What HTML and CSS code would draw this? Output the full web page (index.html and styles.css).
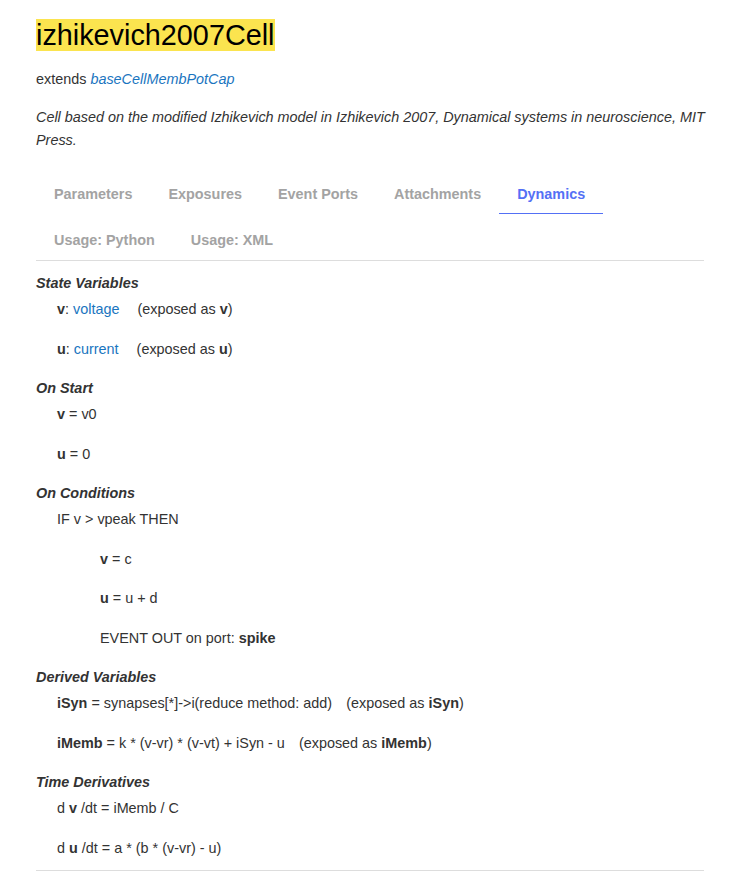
FILE: index.html
```html
<!DOCTYPE html>
<html>
<head>
<meta charset="utf-8">
<link rel="stylesheet" href="styles.css">
</head>
<body>
<div class="page">
  <h1 class="title"><span class="mark">izhikevich2007Cell</span></h1>
  <p class="extends">extends <a class="link-i" href="#">baseCellMembPotCap</a></p>
  <p class="desc">Cell based on the modified Izhikevich model in Izhikevich 2007, Dynamical systems in neuroscience, MIT Press.</p>

  <nav class="tabs">
    <span class="tab">Parameters</span>
    <span class="tab">Exposures</span>
    <span class="tab">Event Ports</span>
    <span class="tab">Attachments</span>
    <span class="tab active">Dynamics</span>
    <span class="tab">Usage: Python</span>
    <span class="tab">Usage: XML</span>
  </nav>

  <div class="content">
    <h3 class="sec first">State Variables</h3>
    <div class="item"><b>v</b>: <a class="link" href="#">voltage</a><span class="gap"></span>(exposed as <b>v</b>)</div>
    <div class="item"><b>u</b>: <a class="link" href="#">current</a><span class="gap"></span>(exposed as <b>u</b>)</div>

    <h3 class="sec">On Start</h3>
    <div class="item"><b>v</b> = v0</div>
    <div class="item"><b>u</b> = 0</div>

    <h3 class="sec">On Conditions</h3>
    <div class="item">IF v &gt; vpeak THEN</div>
    <div class="item nested"><b>v</b> = c</div>
    <div class="item nested"><b>u</b> = u + d</div>
    <div class="item nested">EVENT OUT on port: <b>spike</b></div>

    <h3 class="sec">Derived Variables</h3>
    <div class="item"><b>iSyn</b> = synapses[*]-&gt;i(reduce method: add)<span class="gap2"></span>(exposed as <b>iSyn</b>)</div>
    <div class="item"><b>iMemb</b> = k * (v-vr) * (v-vt) + iSyn - u<span class="gap2"></span>(exposed as <b>iMemb</b>)</div>

    <h3 class="sec">Time Derivatives</h3>
    <div class="item">d <b>v</b> /dt = iMemb / C</div>
    <div class="item last">d <b>u</b> /dt = a * (b * (v-vr) - u)</div>
  </div>
</div>
</body>
</html>
```

FILE: styles.css
```css
html, body {
  margin: 0;
  padding: 0;
  background: #fff;
}
body {
  font-family: "Liberation Sans", Arial, sans-serif;
  font-size: 14.4px;
  color: #333;
}
.page {
  padding: 19px 48px 0 36px;
}
.title {
  margin: 0;
  font-size: 28.8px;
  font-weight: normal;
  line-height: 33px;
  color: #000;
}
.mark {
  background: #fbe44f;
}
.extends {
  margin: 17px 0 0;
  line-height: 20px;
}
.link-i {
  color: #1a75c0;
  font-style: italic;
  text-decoration: none;
}
.link {
  color: #1a75c0;
  text-decoration: none;
}
.desc {
  margin: 17px -8px 0 0;
  font-style: italic;
  line-height: 23px;
}
.tabs {
  display: flex;
  flex-wrap: wrap;
  margin-top: 16px;
  border-bottom: 1px solid #ddd;
}
.tab {
  padding: 16px 18px 9px;
  line-height: 20px;
  font-weight: bold;
  color: #a3a3a3;
  border-bottom: 1px solid transparent;
}
.tab.active {
  color: #5470f5;
  border-bottom-color: #5470f5;
}
.content {
  padding-top: 11px;
  border-bottom: 1px solid #ddd;
}
.sec {
  margin: 1px 0 4px;
  font-size: 14.4px;
  font-style: italic;
  font-weight: bold;
  line-height: 22px;
  color: #333;
}
.sec.first {
  margin-top: 0;
}
.item {
  padding-left: 21px;
  line-height: 22px;
  margin-bottom: 17.5px;
}
.item.nested {
  padding-left: 64px;
}
.item.last {
  margin-bottom: 11px;
}
.gap {
  display: inline-block;
  width: 18px;
}
.gap2 {
  display: inline-block;
  width: 14px;
}
```
